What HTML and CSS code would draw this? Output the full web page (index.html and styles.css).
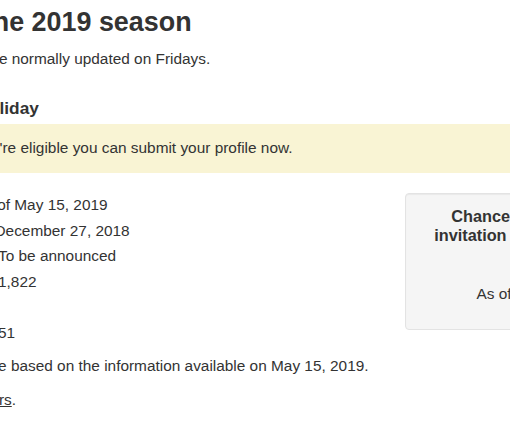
FILE: index.html
```html
<!DOCTYPE html>
<html lang="en">
<head>
<meta charset="utf-8">
<title>Working Holiday pool – 2019 season</title>
<link rel="stylesheet" href="styles.css">
</head>
<body>
<main class="page">
  <h1 class="title">IEC draws for the 2019 season</h1>
  <p class="intro">The numbers in each pool are normally updated on Fridays.</p>

  <h2 class="pool-name">Category 1: Working Holiday</h2>
  <div class="alert">
    <p>This pool is open. If you're eligible you can submit your profile now.</p>
  </div>

  <div class="stats-row">
    <div class="stats">
      <p class="stats-date">Pool status and statistics as of May 15, 2019</p>
      <dl class="stats-list">
        <dt>Last round of invitations:</dt>
        <dd class="stat-date">December 27, 2018</dd>
        <dt>Next round of invitations:</dt>
        <dd>To be announced</dd>
        <dt>Candidates in the pool:</dt>
        <dd>1,822</dd>
        <dt>Invitations to apply issued so far:</dt>
        <dd>51</dd>
      </dl>
    </div>
    <aside class="chances">
      <h3 class="chances-title">Chances of receiving an invitation for the next round:</h3>
      <p class="chances-value">25%</p>
      <p class="chances-date">As of May 15, 2019.</p>
    </aside>
  </div>

  <p class="note">Chances of getting invited are based on the information available on May 15, 2019.</p>
  <p class="more">Read more about <a class="more-link" href="#">the numbers</a>.</p>
</main>
</body>
</html>
```

FILE: styles.css
```css
* {
  box-sizing: border-box;
}

html,
body {
  margin: 0;
  padding: 0;
  background: #ffffff;
  overflow: hidden;
}

body {
  font-family: "Liberation Sans", Arial, sans-serif;
  font-size: 15.4px;
  color: #333333;
}

.page {
  width: 882px;
  margin-left: -197px;
}

.title {
  font-size: 26.9px;
  line-height: 32px;
  font-weight: bold;
  margin: 6px 0 10px;
}

.intro {
  margin: 0;
  line-height: 22px;
}

.pool-name {
  font-size: 17.3px;
  line-height: 24px;
  font-weight: bold;
  margin: 26px 0 4px;
}

.alert {
  background: #f9f4d4;
  border-left: 5px solid #ee7100;
  padding: 13px 15px 14px 29px;
  margin-bottom: 19px;
}

.alert p {
  margin: 0;
  line-height: 22px;
}

.stats-row {
  display: flex;
  align-items: flex-start;
}

.stats {
  flex: 1;
  line-height: 25.6px;
}

.stats-date {
  margin: 0;
}

.stats-list {
  display: grid;
  grid-template-columns: 184px 1fr;
  column-gap: 11px;
  align-items: end;
  margin: 0;
}

.stats-list dt {
  font-weight: normal;
}

.stats-list dd {
  margin: 0;
}

.stats-list .stat-date {
  text-indent: -3.5px;
}

.chances {
  flex: none;
  width: 280px;
  margin-top: 1px;
  padding: 12.6px 15px 24.4px;
  background: #f5f5f5;
  border: 1px solid #e3e3e3;
  border-radius: 4px;
  box-shadow: inset 0 1px 1px rgba(0, 0, 0, 0.05);
  text-align: center;
}

.chances-title {
  font-size: 16.3px;
  line-height: 19.5px;
  font-weight: bold;
  margin: 0;
}

.chances-value {
  font-size: 26px;
  line-height: 37px;
  font-weight: bold;
  margin: 0;
}

.chances-date {
  margin: 0;
  line-height: 22px;
}

.note {
  margin: 7.8px 0 0;
  line-height: 25.6px;
}

.more {
  margin: 10px 0 0;
  line-height: 22px;
}

.more-link {
  color: #333333;
  text-decoration: underline;
}
```
